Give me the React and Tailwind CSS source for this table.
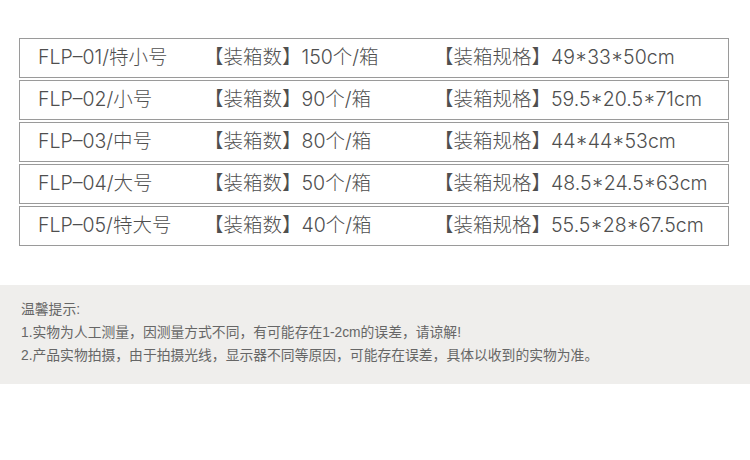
import React from 'react';

const rows = [
  { name: 'FLP–01/特小号', count: '150个/箱', size: '49*33*50cm' },
  { name: 'FLP–02/小号', count: '90个/箱', size: '59.5*20.5*71cm' },
  { name: 'FLP–03/中号', count: '80个/箱', size: '44*44*53cm' },
  { name: 'FLP–04/大号', count: '50个/箱', size: '48.5*24.5*63cm' },
  { name: 'FLP–05/特大号', count: '40个/箱', size: '55.5*28*67.5cm' }
];

const font = { fontFamily: 'Inter, "Noto Sans CJK SC", sans-serif' };

const App = () => {
  return (
    <div className="w-[750px] h-[460px] bg-white overflow-hidden" style={font}>
      <div className="pt-[38px] pl-[19px] pr-[21px] flex flex-col gap-[2px]">
        {rows.map((row) => (
          <div
            key={row.name}
            className="h-[40px] border border-[#9a9a9a] flex items-center pl-[18px] text-[19.5px] font-light text-[#4f4f4f] whitespace-nowrap"
          >
            <span className="w-[166px]">{row.name}</span>
            <span className="w-[230px]">【装箱数】{row.count}</span>
            <span>【装箱规格】{row.size}</span>
          </div>
        ))}
      </div>

      <div className="mt-[39px] h-[99px] bg-[#efeeec] pt-[13px] pl-[21px] text-[13.8px] leading-[23px] text-[#666666]" style={{ fontFamily: '"Liberation Sans", "Noto Sans CJK SC", sans-serif' }}>
        <p>温馨提示:</p>
        <p>1.实物为人工测量，因测量方式不同，有可能存在1-2cm的误差，请谅解!</p>
        <p>2.产品实物拍摄，由于拍摄光线，显示器不同等原因，可能存在误差，具体以收到的实物为准。</p>
      </div>
    </div>
  );
};

export default App;
